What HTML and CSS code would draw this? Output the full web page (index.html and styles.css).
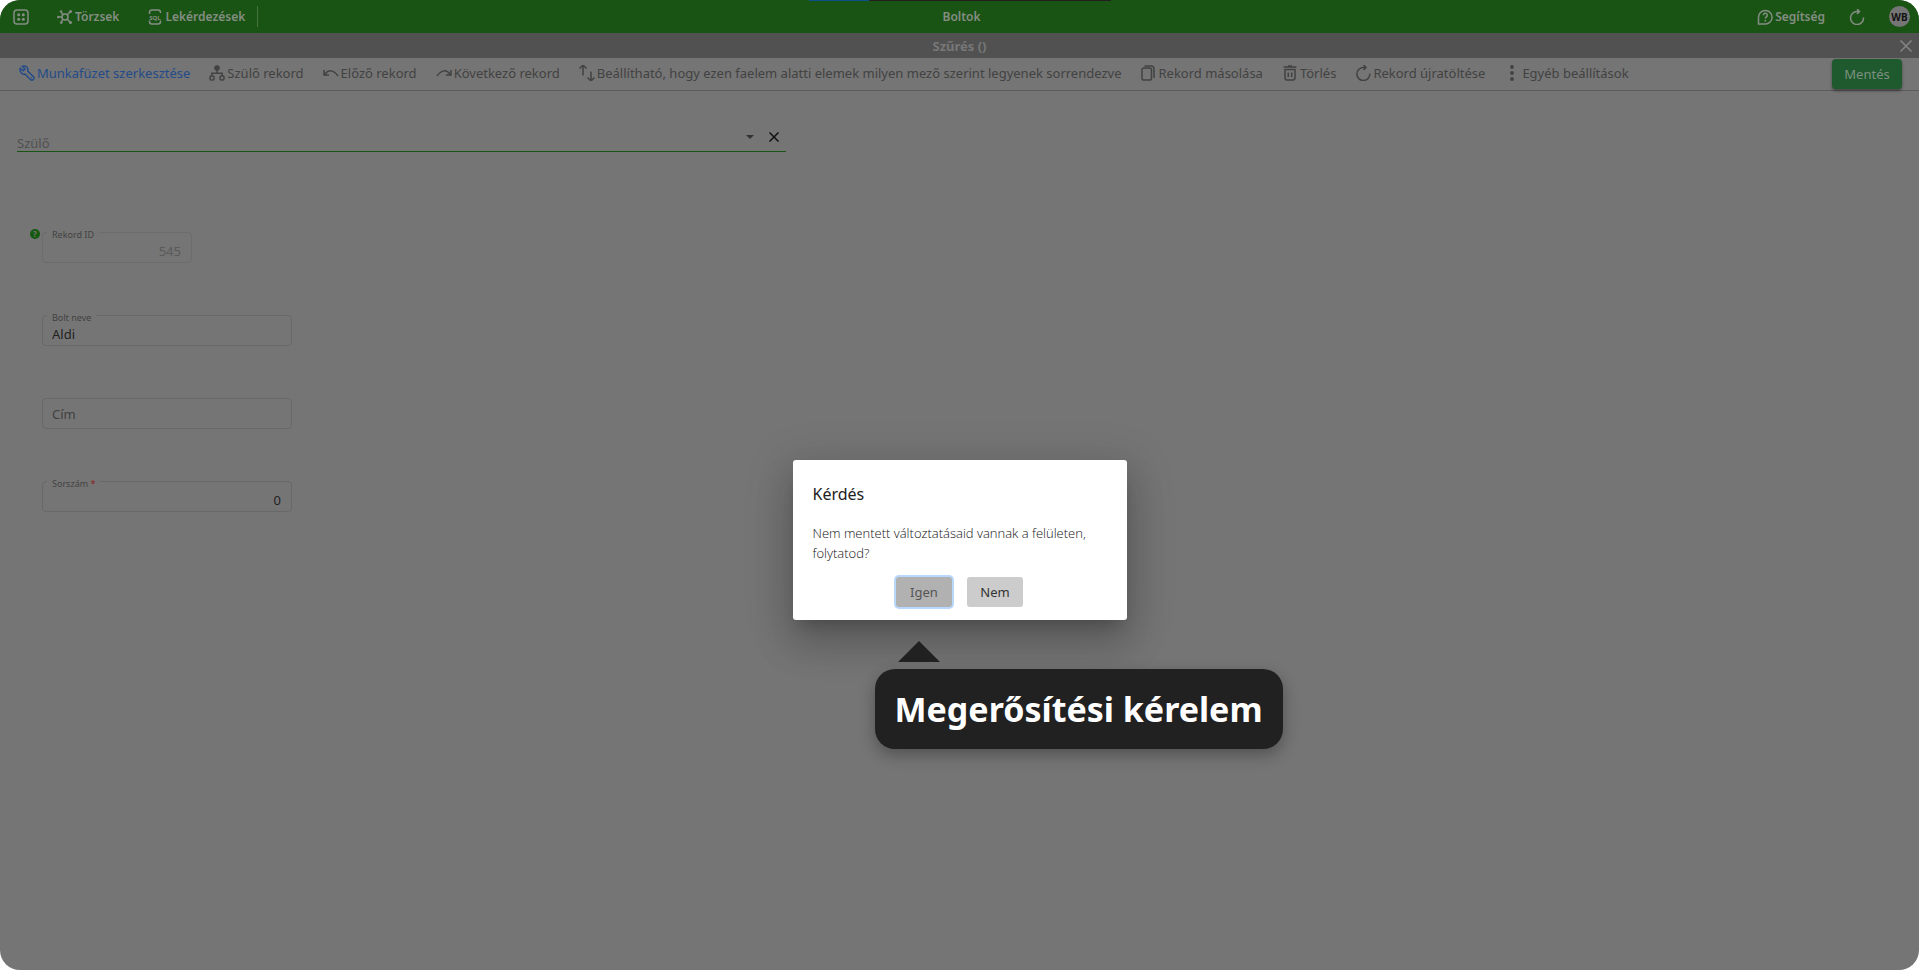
FILE: index.html
```html
<!DOCTYPE html>
<html lang="hu">
<head>
<meta charset="utf-8">
<title>Boltok</title>
<link rel="stylesheet" href="styles.css">
</head>
<body>
<div class="app">
  <header class="topbar">
    <div class="progress"><span class="progress-value"></span></div>
    <nav class="top-left">
      <button class="top-btn top-btn-grid" aria-label="Menü"><svg class="icon" viewBox="0 0 16 16"><rect x="1" y="1" width="14" height="14" rx="3"/><g class="solid"><circle cx="5.700" cy="5.700" r="1.500"/><circle cx="10.300" cy="5.700" r="1.500"/><circle cx="5.700" cy="10.300" r="1.500"/><circle cx="10.300" cy="10.300" r="1.500"/></g></svg></button>
      <button class="top-btn"><svg class="icon" viewBox="0 0 16 16"><circle cx="8" cy="8" r="3"/><path d="M10 6l3-3M6 6L4.500 3.500M10 10l3 3M6 10l-1.500 3M5 8H2"/><g class="solid"><circle cx="13.500" cy="2.500" r="1.500"/><circle cx="4" cy="2.500" r="1.200"/><circle cx="13.500" cy="13.500" r="1.500"/><circle cx="4.300" cy="13.600" r="1.300"/><circle cx="1.300" cy="8" r="1.200"/></g></svg>Törzsek</button>
      <button class="top-btn"><svg class="icon" viewBox="0 0 16 16"><path d="M2.500 5V3.500Q2.500 1 5 1h6q2.500 0 2.500 2.500V4M2.500 11.500v1Q2.500 15 5 15h6q2.500 0 2.500-2.500v-1"/><text class="icon-text" x="8" y="10.500">SQL</text></svg>Lekérdezések</button>
      <span class="divider"></span>
    </nav>
    <h1 class="title">Boltok</h1>
    <div class="top-right">
      <button class="top-btn"><svg class="icon" viewBox="0 0 16 16"><path d="M1.500 15V8A6.800 6.800 0 1 1 8.300 15z"/><path d="M6.300 6.300a2 2 0 1 1 3 1.700q-1 .5-1 1.500"/><circle class="solid" cx="8.300" cy="11.700" r=".9"/></svg>Segítség</button>
      <button class="top-btn" aria-label="Frissítés"><svg class="icon" viewBox="0 0 16 16"><path d="M14.500 8.500A6.500 6.500 0 1 1 8 2.500h2M8 0l2.500 2.500L8 5"/></svg></button>
      <button class="avatar">WB</button>
    </div>
  </header>
  <div class="filterbar">
    <h2 class="title">Szűrés ()</h2>
    <button class="close" aria-label="Bezárás"><svg class="icon-close" viewBox="0 0 12 12"><path d="M0.500 0.500l11 11M11.500 0.500l-11 11"/></svg></button>
  </div>
  <div class="toolbar">
    <button class="tool tool-active"><svg class="icon" viewBox="0 0 16 16"><path d="M1.300 3.300l2.800 2.500 1.800-1.700L3.500 1.300c3.500-1 6 1.200 5.200 4.700l6 6c1.200 1.800-1.200 4-3 2.700L6 9C3 9.900.3 7 1.300 3.300z"/><circle class="solid" cx="12.500" cy="12.700" r=".6"/></svg>Munkafüzet szerkesztése</button>
    <button class="tool"><svg class="icon" viewBox="0 0 16 16"><circle class="solid" cx="8" cy="3" r="2.800"/><path d="M8 5v3M2.800 11V8.300h10.400V11"/><rect x="1" y="11" width="4" height="4" rx="1.300"/><rect x="11" y="11" width="4" height="4" rx="1.300"/></svg>Szülő rekord</button>
    <button class="tool"><svg class="icon" viewBox="0 0 16 16"><path d="M1 5v5h5M1.500 9.500Q8 1.500 15 11"/></svg>Előző rekord</button>
    <button class="tool"><svg class="icon" viewBox="0 0 16 16"><path d="M15 5v5h-5M14.500 9.500Q8 1.500 1 11"/></svg>Következő rekord</button>
    <button class="tool"><svg class="icon" viewBox="0 0 16 16"><path d="M4 10.500V0M.5 3.500L4 0l3.500 3.500M12 6.500V16M8.500 12.500L12 16l3.500-3.500"/></svg>Beállítható, hogy ezen faelem alatti elemek milyen mező szerint legyenek sorrendezve</button>
    <button class="tool"><svg class="icon" viewBox="0 0 16 16"><rect x="2" y="3" width="9.500" height="12" rx="1.800"/><path d="M4.500 1H11q3 0 3 3v9"/></svg>Rekord másolása</button>
    <button class="tool"><svg class="icon" viewBox="0 0 16 16"><path d="M1.500 2h13M6 1h4M3 4.500v8Q3 15 5 15h6q2 0 2-2.500v-8zM6.300 7.500v4.500M9.700 7.500v4.500"/></svg>Törlés</button>
    <button class="tool"><svg class="icon" viewBox="0 0 16 16"><path d="M14.800 8.500A6.500 6.500 0 1 1 8 2.500h3M8.500 0L11 2.500 8.500 5"/></svg>Rekord újratöltése</button>
    <button class="tool"><svg class="icon" viewBox="0 0 16 16"><g class="solid"><circle cx="8" cy="2" r="1.900"/><circle cx="8" cy="8" r="1.900"/><circle cx="8" cy="14" r="1.900"/></g></svg>Egyéb beállítások</button>
    <button class="save">Mentés</button>
  </div>
  <main class="content">
    <div class="parent">
      <label class="parent-label" for="parent">Szülő</label>
      <input class="parent-input" id="parent" type="text">
      <button class="parent-btn" aria-label="Lista"><svg class="icon-caret" viewBox="0 0 8 4"><path d="M0 0h8L4 4z"/></svg></button>
      <button class="parent-btn parent-clear" aria-label="Törlés"><svg class="icon-clear" viewBox="0 0 10 10"><path d="M.5 .5l9 9M9.500 .5l-9 9"/></svg></button>
    </div>
    <form class="fields">
      <div class="field field-short">
        <span class="help">?</span>
        <label class="field-label" for="rid">Rekord ID</label>
        <input class="field-input number" id="rid" value="545" disabled>
      </div>
      <div class="field">
        <label class="field-label" for="name">Bolt neve</label>
        <input class="field-input" id="name" value="Aldi">
      </div>
      <div class="field">
        <input class="field-input empty" id="address" aria-label="Cím" placeholder="Cím">
      </div>
      <div class="field">
        <label class="field-label" for="order">Sorszám <span class="required">*</span></label>
        <input class="field-input number" id="order" value="0">
      </div>
    </form>
  </main>
  <div class="overlay">
    <div class="dialog" role="dialog" aria-labelledby="dialog-title">
      <h3 class="dialog-title" id="dialog-title">Kérdés</h3>
      <p class="dialog-text">Nem mentett változtatásaid vannak a felületen, folytatod?</p>
      <div class="dialog-actions">
        <button class="dialog-btn dialog-btn-focus">Igen</button>
        <button class="dialog-btn">Nem</button>
      </div>
      <div class="callout">Megerősítési kérelem</div>
    </div>
  </div>
</div>
</body>
</html>
```
FILE: styles.css
```css
* { box-sizing: border-box; }
body { margin: 0; background: #fff; font-family: "Noto Sans", sans-serif; font-size: 13px; color: #424242; }
button, input { font: inherit; color: inherit; border: 0; background: none; padding: 0; margin: 0; }
button { display: flex; align-items: center; justify-content: center; white-space: nowrap; }
h1, h2, h3, p { margin: 0; }
svg { display: block; fill: none; stroke: currentColor; }
.icon { width: 16px; height: 16px; flex: none; stroke-width: 1.500; }
.solid { fill: currentColor; stroke: none; }
.icon-text { font: bold 6px "Noto Sans", sans-serif; fill: currentColor; stroke: none; text-anchor: middle; }
.app { position: relative; min-height: 100vh; background: #757575; border-radius: 20px; overflow: hidden; }

.topbar { position: relative; display: grid; grid-template-columns: 1fr auto 1fr; align-items: center; height: 33px; padding: 0 9px 0 13px; background: #1a5414; color: #848d83; }
.progress { position: absolute; top: 0; left: 50%; width: 302px; height: 1px; margin-left: -151px; background: #231f20; }
.progress-value { display: block; width: 20%; height: 1px; background: #09528c; }
.top-left, .top-right { display: flex; align-items: center; }
.top-left { gap: 28px; }
.top-right { justify-content: flex-end; gap: 24px; }
.top-btn { gap: 2px; font-size: 12px; font-weight: 600; line-height: 20px; }
.divider { width: 1px; height: 21px; margin-left: -16px; background: #48713f; }
.title { font-size: 12px; line-height: 20px; font-weight: 600; text-align: center; }
.avatar { width: 21px; height: 21px; border-radius: 50%; background: #757575; color: #111; font-size: 10px; font-weight: 700; }

.filterbar { display: grid; grid-template-columns: 1fr auto 1fr; align-items: center; height: 25px; padding: 0 7px; background: #515151; color: #777; }
.filterbar .title { grid-column: 2; font-size: 13px; font-weight: 700; }
.close { justify-self: end; color: #858585; }
.icon-close { width: 12px; height: 12px; stroke-width: 1.500; }

.toolbar { display: flex; align-items: center; gap: 19px; height: 33px; padding: 0 17px 0 19px; border-bottom: 1px solid #5c5c5c; }
.tool { gap: 2px; padding-bottom: 2px; line-height: 20px; }
.tool-active { color: #244b89; }
.save { width: 70px; height: 30px; margin-left: auto; border-radius: 4px; background: #1e5a2d; color: #7d8f80; box-shadow: 0 2px 3px rgba(0, 0, 0, .4); }

.content { padding: 32px 17px; }
.parent { display: flex; align-items: center; width: 40.8%; height: 29px; border-bottom: 1px solid #1a5414; }
.parent-label { align-self: flex-end; line-height: 16px; color: #505050; }
.parent-input { flex: 1; min-width: 0; outline: 0; }
.parent-btn { width: 24px; height: 24px; }
.parent-clear { color: #111; }
.icon-caret { width: 8px; height: 4px; fill: #333; stroke: none; }
.icon-clear { width: 10px; height: 10px; stroke-width: 1.500; }
.fields { display: grid; gap: 52px; padding: 80px 25px 0; justify-content: start; grid-template-columns: 250px; }
.field { position: relative; }
.field-short { width: 150px; }
.field-input { display: block; width: 100%; height: 31px; padding: 6px 10px 0 9px; border: 1px solid #686868; border-radius: 4px; color: #222; }
.field-input:disabled { border-color: #6c6c6c; color: #595959; }
.empty { padding-top: 0; }
.empty::placeholder { color: #414141; opacity: 1; }
.number { text-align: right; }
.field-label { position: absolute; top: -4px; left: 5px; padding: 0 5px; background: #757575; font-size: 9px; line-height: 14px; }
.required { color: #8b1d1d; }
.help { position: absolute; top: -3px; left: -12px; width: 10px; height: 10px; border-radius: 50%; background: #145a10; color: #757575; font-size: 8px; line-height: 10px; font-weight: 700; text-align: center; }

.overlay { position: absolute; inset: 0; display: grid; place-items: center; padding-top: 110px; }
.dialog { position: relative; width: 334px; padding: 23px 20px 13px; border-radius: 3px; background: #fff; color: #212121; box-shadow: 0 11px 15px -7px rgba(0, 0, 0, .2), 0 24px 38px 3px rgba(0, 0, 0, .14), 0 9px 46px 8px rgba(0, 0, 0, .12); }
.dialog-title { font-size: 16px; line-height: 22px; font-weight: 400; }
.dialog-text { padding-top: 18px; font-family: "Open Sans", "Noto Sans", sans-serif; font-size: 13px; font-weight: 300; line-height: 20px; color: #111; }
.dialog-actions { display: flex; justify-content: center; gap: 15px; padding-top: 14px; }
.dialog-btn { width: 56px; height: 30px; border-radius: 3px; background: #ccc; color: #333; }
.dialog-btn-focus { background: #b1b1b1; color: #555; box-shadow: 0 0 0 2px #b8d9fd; }
.callout { position: absolute; top: 209px; left: 82px; padding: 15px 20px; border-radius: 20px; background: #212121; color: #fff; font-size: 34px; line-height: 50px; font-weight: 700; white-space: nowrap; box-shadow: 0 6px 16px rgba(0, 0, 0, .3); }
.callout::before { content: ""; position: absolute; top: -28px; left: 23px; border: 21px solid transparent; border-top: 0; border-bottom-color: #212121; }
```
